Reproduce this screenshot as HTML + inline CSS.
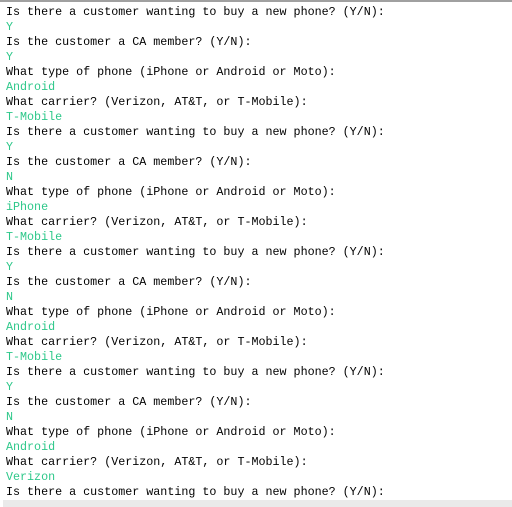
<html><head><style>
body{margin:0;width:512px;height:507px;background:#fff;overflow:hidden;position:relative}
.top{position:absolute;left:0;top:0;width:512px;height:2px;background:#a0a0a0}
pre{position:absolute;left:6px;top:5px;margin:0;font-family:"Liberation Mono",monospace;font-size:11.7px;line-height:15px;color:#000}
.g{color:#2ec88a}
.sb{position:absolute;left:3px;top:500px;width:509px;height:7px;background:#eaeaea}
</style></head><body><div class="top"></div>
<pre>Is there a customer wanting to buy a new phone? (Y/N):
<span class="g">Y</span>
Is the customer a CA member? (Y/N):
<span class="g">Y</span>
What type of phone (iPhone or Android or Moto):
<span class="g">Android</span>
What carrier? (Verizon, AT&amp;T, or T-Mobile):
<span class="g">T-Mobile</span>
Is there a customer wanting to buy a new phone? (Y/N):
<span class="g">Y</span>
Is the customer a CA member? (Y/N):
<span class="g">N</span>
What type of phone (iPhone or Android or Moto):
<span class="g">iPhone</span>
What carrier? (Verizon, AT&amp;T, or T-Mobile):
<span class="g">T-Mobile</span>
Is there a customer wanting to buy a new phone? (Y/N):
<span class="g">Y</span>
Is the customer a CA member? (Y/N):
<span class="g">N</span>
What type of phone (iPhone or Android or Moto):
<span class="g">Android</span>
What carrier? (Verizon, AT&amp;T, or T-Mobile):
<span class="g">T-Mobile</span>
Is there a customer wanting to buy a new phone? (Y/N):
<span class="g">Y</span>
Is the customer a CA member? (Y/N):
<span class="g">N</span>
What type of phone (iPhone or Android or Moto):
<span class="g">Android</span>
What carrier? (Verizon, AT&amp;T, or T-Mobile):
<span class="g">Verizon</span>
Is there a customer wanting to buy a new phone? (Y/N):</pre>
<div class="sb"></div>
</body></html>
